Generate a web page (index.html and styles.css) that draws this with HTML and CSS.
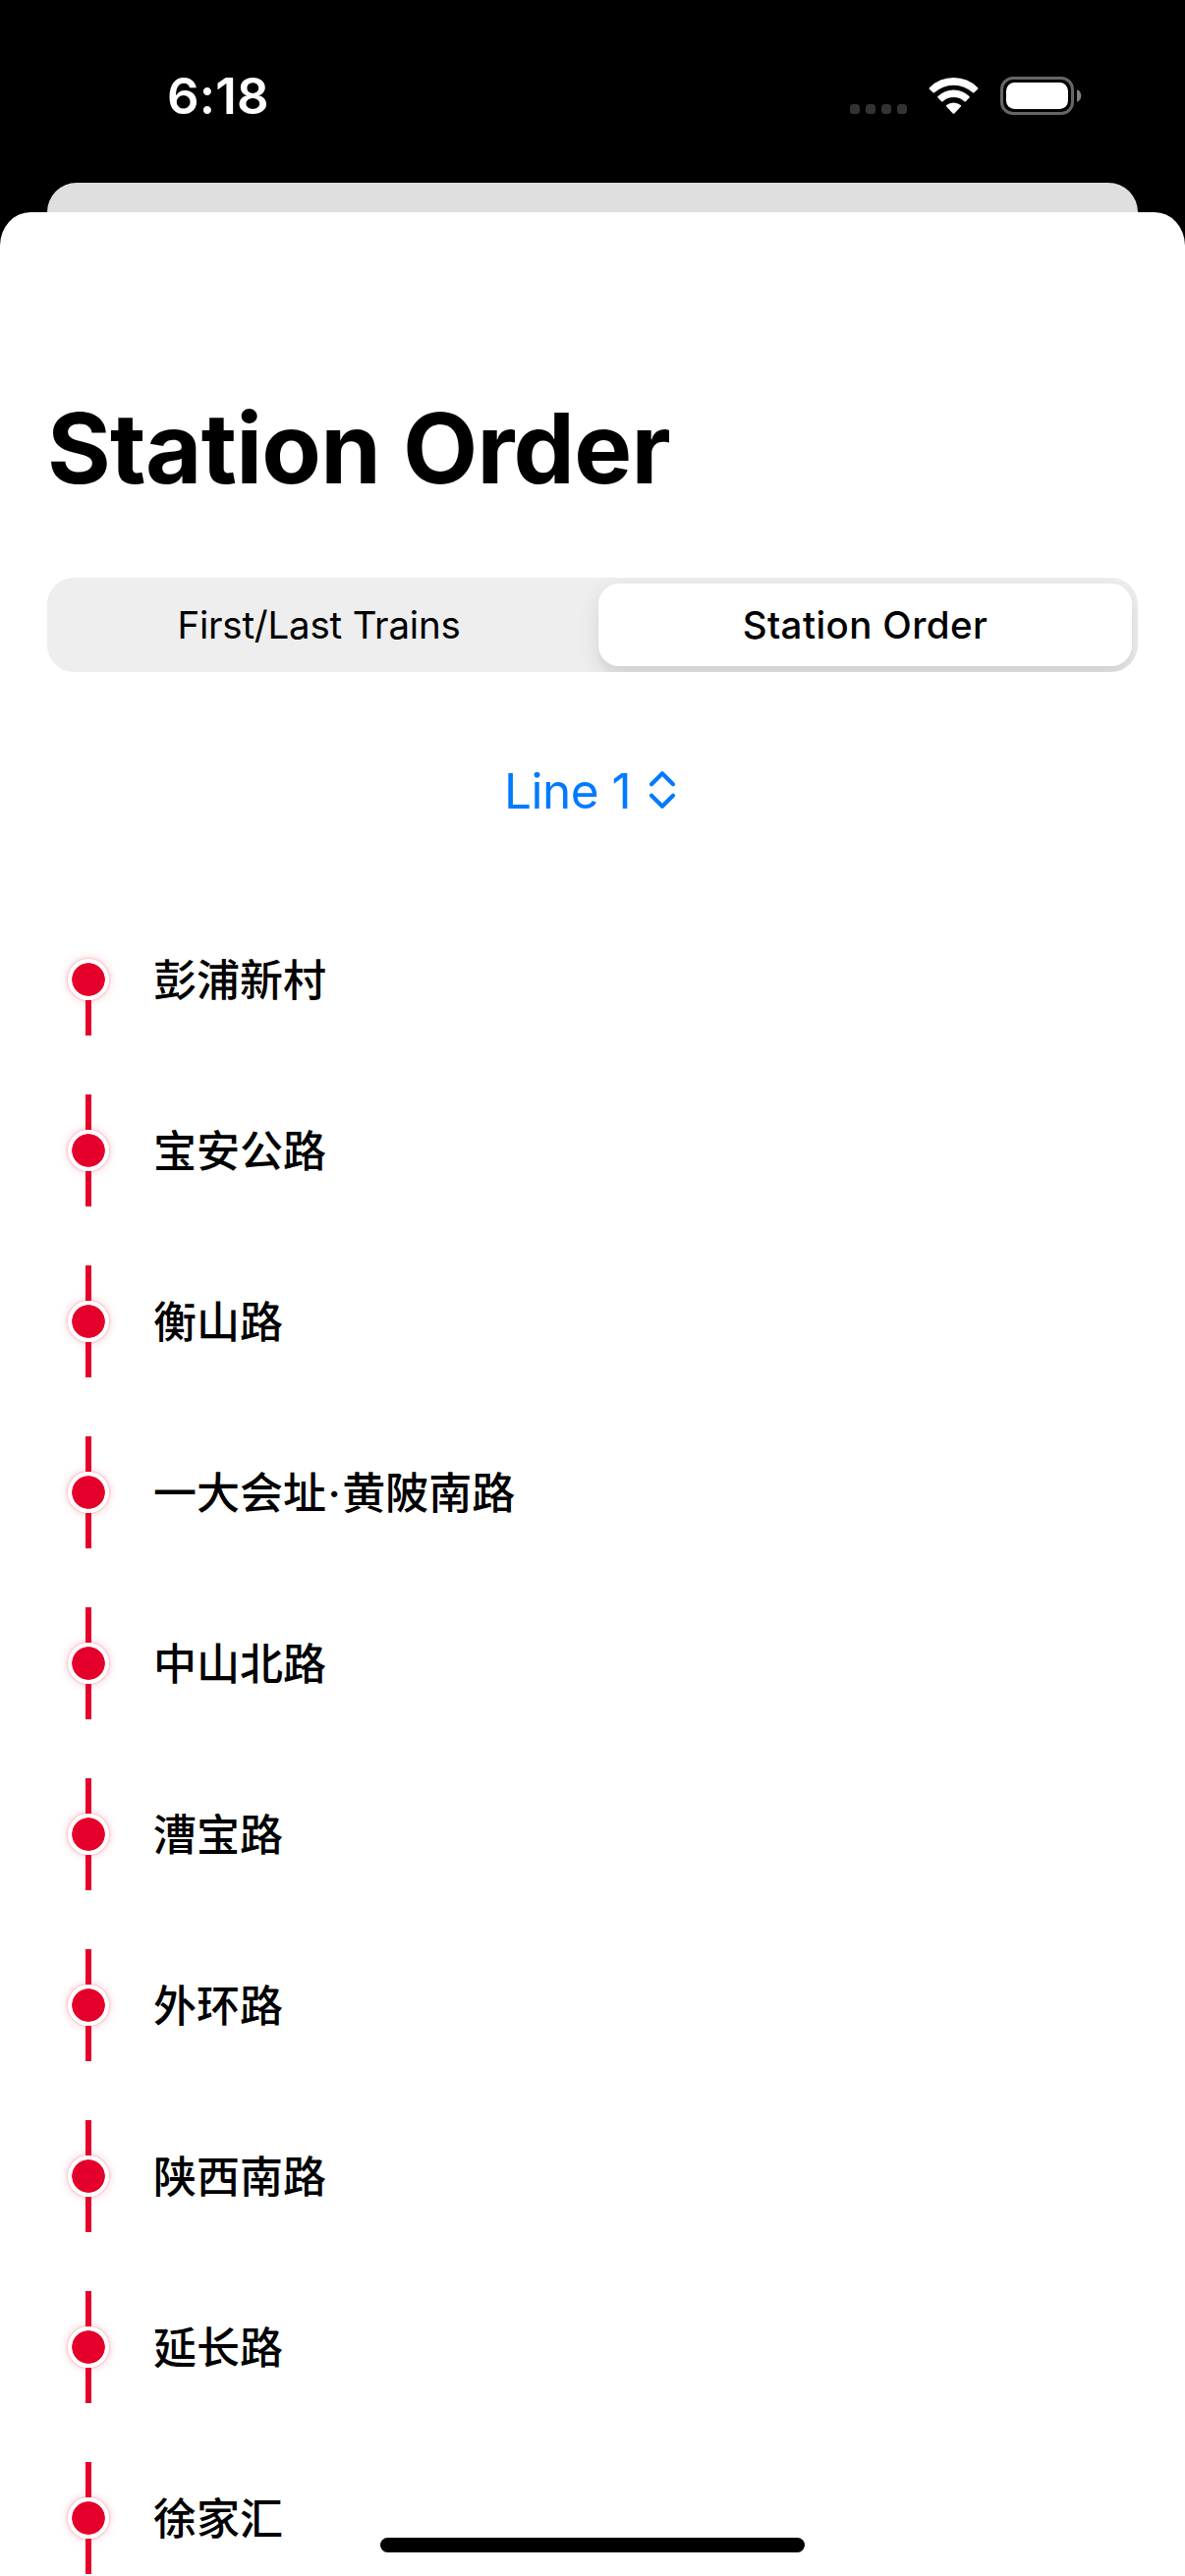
FILE: index.html
```html
<!DOCTYPE html>
<html lang="en">
<head>
<meta charset="utf-8">
<title>Station Order</title>
<link rel="stylesheet" href="styles.css">
</head>
<body>
<header class="status-bar">
  <span class="time">6:18</span>
  <div class="indicators">
    <svg class="cellular" width="58" height="38" viewBox="0 0 58 38" fill="#333">
      <rect x="0" y="28" width="10" height="10" rx="3.5"/>
      <rect x="16" y="28" width="10" height="10" rx="3.5"/>
      <rect x="32" y="28" width="10" height="10" rx="3.5"/>
      <rect x="48" y="28" width="10" height="10" rx="3.5"/>
    </svg>
    <svg class="wifi" width="51" height="39" viewBox="0 0 51 39" fill="#fff">
      <path d="M.9 11.2A34.5 34.5 0 0 1 50.1 11.2Q50.8 12 50.1 12.8L46.4 16.3Q45.7 16.9 45 16.3A28.7 28.7 0 0 0 6 16.3Q5.3 16.9 4.6 16.3L.9 12.8Q.2 12 .9 11.2Z"/>
      <path d="M9.5 20A23 23 0 0 1 41.5 20Q42.2 20.7 41.5 21.4L37.8 25.2Q37.1 25.8 36.4 25.2A16.6 16.6 0 0 0 14.6 25.2Q13.9 25.8 13.2 25.2L9.5 21.4Q8.8 20.7 9.5 20Z"/>
      <path d="M18.2 29A11.5 11.5 0 0 1 32.8 29Q33.5 29.8 32.8 30.5L26.3 37.4Q25.5 38.2 24.7 37.4L18.2 30.5Q17.5 29.8 18.2 29Z"/>
    </svg>
    <svg class="battery" width="83" height="39" viewBox="0 0 83 39">
      <rect x="1.5" y="1.5" width="72" height="36" rx="11.5" fill="none" stroke="#666" stroke-width="3"/>
      <rect x="6" y="6" width="63" height="27" rx="8.5" fill="#fff"/>
      <path d="M78 13.3Q82.3 15 82.3 19.5T78 25.7Z" fill="#808080"/>
    </svg>
  </div>
</header>
<div class="back-card"></div>
<main class="sheet">
  <h1 class="title">Station Order</h1>
  <div class="segmented">
    <div class="segment">First/Last Trains</div>
    <div class="segment selected">Station Order</div>
  </div>
  <div class="line-picker">
    <span>Line 1</span>
    <svg width="36" height="42" viewBox="0 0 36 42" fill="none" stroke="#007aff" stroke-width="4.2" stroke-linecap="round" stroke-linejoin="round">
      <path d="M6 15.2 17 4.2 28 15.2M6 26.8 17 37.8 28 26.8"/>
    </svg>
  </div>
  <ol class="stations">
    <li class="station"><span class="marker"><i class="dot"></i></span><span class="name" lang="zh-CN">彭浦新村</span></li>
    <li class="station"><span class="marker"><i class="dot"></i></span><span class="name" lang="zh-CN">宝安公路</span></li>
    <li class="station"><span class="marker"><i class="dot"></i></span><span class="name" lang="zh-CN">衡山路</span></li>
    <li class="station"><span class="marker"><i class="dot"></i></span><span class="name" lang="zh-CN">一大会址<span class="interpunct">·</span>黄陂南路</span></li>
    <li class="station"><span class="marker"><i class="dot"></i></span><span class="name" lang="zh-CN">中山北路</span></li>
    <li class="station"><span class="marker"><i class="dot"></i></span><span class="name" lang="zh-CN">漕宝路</span></li>
    <li class="station"><span class="marker"><i class="dot"></i></span><span class="name" lang="zh-CN">外环路</span></li>
    <li class="station"><span class="marker"><i class="dot"></i></span><span class="name" lang="zh-CN">陕西南路</span></li>
    <li class="station"><span class="marker"><i class="dot"></i></span><span class="name" lang="zh-CN">延长路</span></li>
    <li class="station"><span class="marker"><i class="dot"></i></span><span class="name" lang="zh-CN">徐家汇</span></li>
  </ol>
</main>
<div class="home-indicator"></div>
</body>
</html>
```
FILE: styles.css
```css
* { box-sizing: border-box; }

body {
  margin: 0;
  position: relative;
  width: 1206px;
  height: 2622px;
  overflow: hidden;
  background: #000;
  color: #000;
  font-family: Inter, "Noto Sans CJK SC", sans-serif;
}

svg { display: block; }

.status-bar {
  display: flex;
  align-items: center;
  justify-content: space-between;
  height: 186px;
  padding: 9px 105px 0 170px;
  color: #fff;
}

.time {
  font-size: 51px;
  font-weight: 600;
  line-height: 62px;
  letter-spacing: 0.2px;
}

.indicators {
  display: flex;
  gap: 22px;
}

.back-card {
  height: 30px;
  margin: 0 48px;
  border-radius: 30px 30px 0 0;
  background: #dfdfdf;
}

.sheet {
  height: 2406px;
  padding: 180px 48px 0;
  overflow: hidden;
  border-radius: 31px 31px 0 0 / 34px 34px 0 0;
  background: #fff;
}

.title {
  margin: 0;
  font-size: 99px;
  font-weight: 700;
  line-height: 120px;
  letter-spacing: -0.75px;
}

.segmented {
  display: grid;
  grid-template-columns: 1fr 543px;
  gap: 8px;
  height: 96px;
  margin-top: 72px;
  padding: 6px 6px 6px 0;
  overflow: hidden;
  border-radius: 27px;
  background: #eee;
}

.segment {
  font-size: 38.5px;
  line-height: 84px;
  letter-spacing: -0.2px;
  text-align: center;
}

.selected {
  border-radius: 21px;
  background: #fff;
  box-shadow: 0 9px 24px rgba(0, 0, 0, 0.1), 0 9px 3px rgba(0, 0, 0, 0.03);
  font-weight: 550;
  letter-spacing: 0.4px;
}

.line-picker {
  display: flex;
  align-items: center;
  justify-content: center;
  gap: 15px;
  height: 60px;
  margin-top: 91px;
  color: #007aff;
  font-size: 49.5px;
  line-height: 60px;
  letter-spacing: -0.5px;
}

.line-picker svg { margin-bottom: 2px; }

.stations {
  display: flex;
  flex-direction: column;
  gap: 60px;
  margin: 105px 0 0;
  padding: 0;
  list-style: none;
}

.station {
  display: flex;
  align-items: center;
  gap: 24px;
  height: 114px;
}

.marker {
  display: flex;
  flex-direction: column;
  align-items: center;
  width: 84px;
  height: 114px;
}

.marker::before,
.marker::after {
  content: "";
  width: 6px;
  height: 36px;
  background: #e4002b;
}

.station:first-child .marker::before { background: none; }

.dot {
  width: 42px;
  height: 42px;
  border-radius: 50%;
  background: radial-gradient(circle, #e4002b 16.4px, #fff 17.1px);
  box-shadow: 0 0 2px rgba(228, 0, 43, 0.45), 0 0 10px rgba(228, 0, 43, 0.26);
}

.name {
  padding-top: 2px;
  font-size: 44px;
  font-weight: 500;
  line-height: 60px;
}

.interpunct { padding: 0 1.5px; }

.home-indicator {
  position: absolute;
  bottom: 24px;
  left: 387px;
  width: 432px;
  height: 15px;
  border-radius: 7.5px;
  background: #000;
}
```
